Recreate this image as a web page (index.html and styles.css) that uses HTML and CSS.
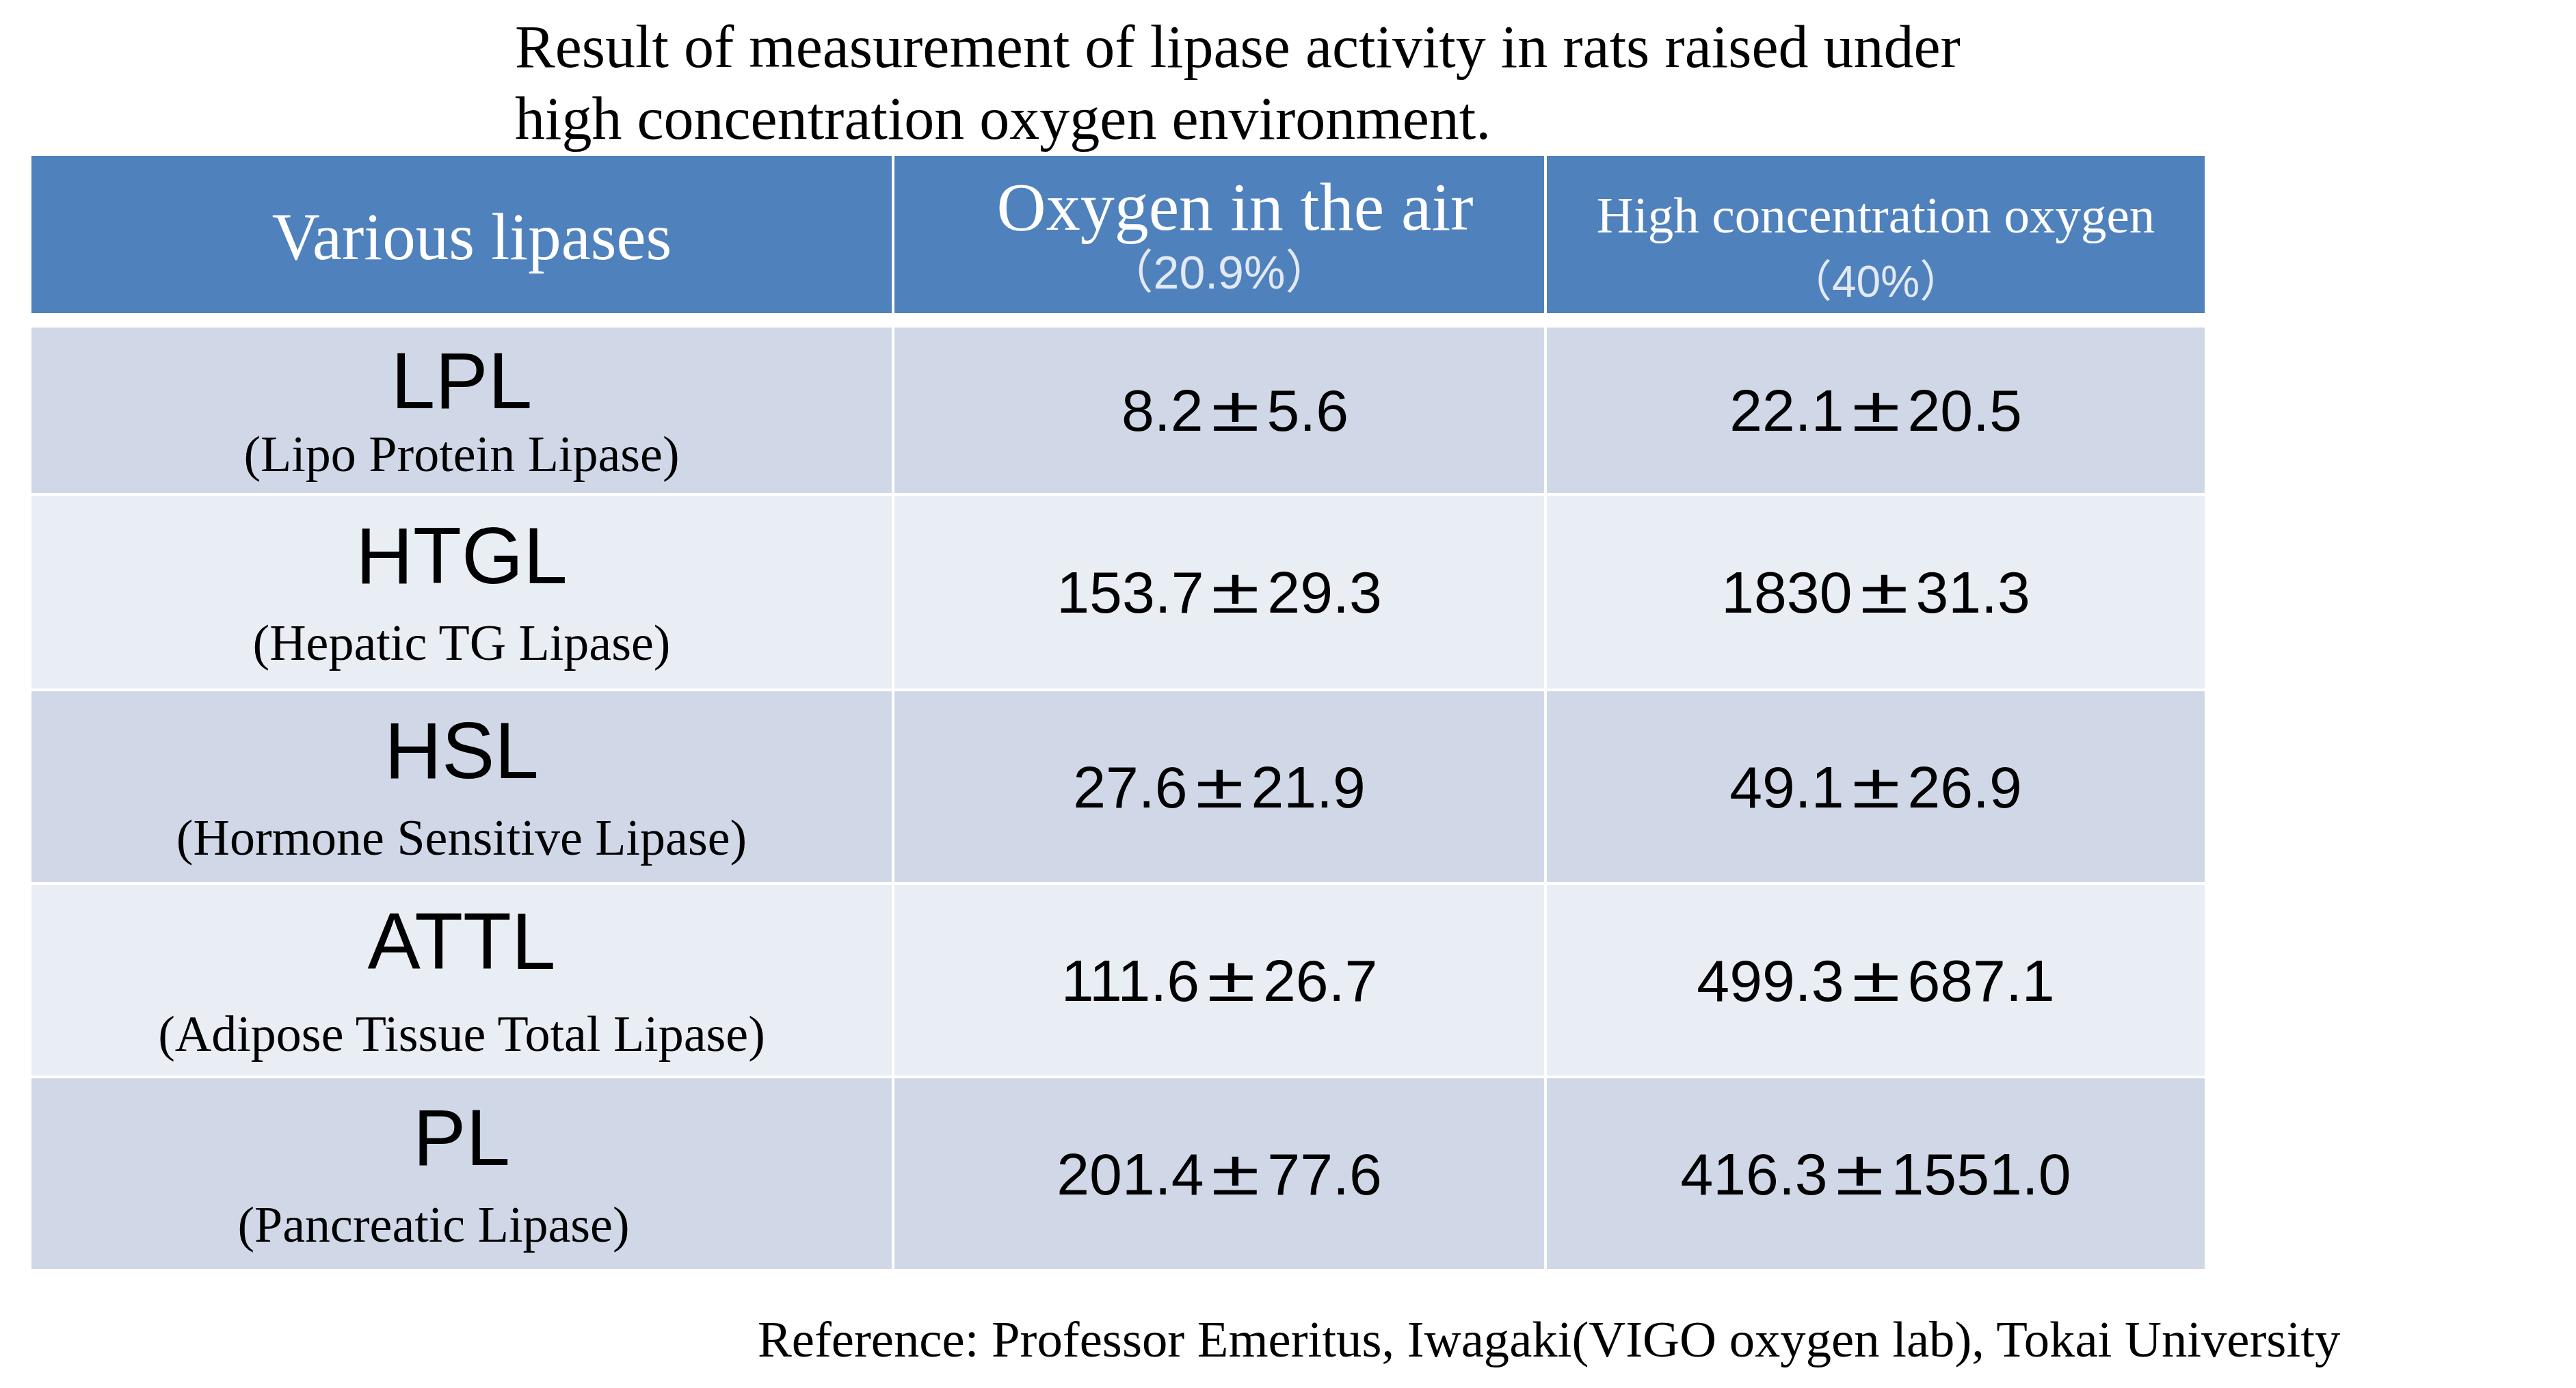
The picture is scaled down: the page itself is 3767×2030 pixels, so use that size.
FILE: index.html
```html
<!DOCTYPE html>
<html lang="en">
<head>
<meta charset="utf-8">
<title>Lipase activity</title>
<link rel="stylesheet" href="styles.css">
</head>
<body>
<div class="page">
  <h1 class="title">Result of measurement of lipase activity in rats raised under<br>high concentration oxygen environment.</h1>
  <div class="table">
    <div class="row head">
      <div class="cell c1"><span class="h-main various">Various lipases</span></div>
      <div class="cell c2"><span class="h-main shift">Oxygen in the air</span><span class="h-sub">（20.9%）</span></div>
      <div class="cell c3"><span class="h-main small">High concentration oxygen</span><span class="h-sub sub3">（40%）</span></div>
    </div>
    <div class="body">
      <div class="row odd r1 tight">
        <div class="cell name"><span class="abbr">LPL</span><span class="full">(Lipo Protein Lipase)</span></div>
        <div class="cell shift"><span class="num">8.2<span class="pm">±</span>5.6</span></div>
        <div class="cell"><span class="num">22.1<span class="pm">±</span>20.5</span></div>
      </div>
      <div class="row even r2">
        <div class="cell name"><span class="abbr">HTGL</span><span class="full">(Hepatic TG Lipase)</span></div>
        <div class="cell"><span class="num">153.7<span class="pm">±</span>29.3</span></div>
        <div class="cell"><span class="num">1830<span class="pm">±</span>31.3</span></div>
      </div>
      <div class="row odd r3">
        <div class="cell name"><span class="abbr">HSL</span><span class="full">(Hormone Sensitive Lipase)</span></div>
        <div class="cell"><span class="num">27.6<span class="pm">±</span>21.9</span></div>
        <div class="cell"><span class="num">49.1<span class="pm">±</span>26.9</span></div>
      </div>
      <div class="row even r4">
        <div class="cell name"><span class="abbr">ATTL</span><span class="full wide">(Adipose Tissue Total Lipase)</span></div>
        <div class="cell"><span class="num">111.6<span class="pm">±</span>26.7</span></div>
        <div class="cell"><span class="num">499.3<span class="pm">±</span>687.1</span></div>
      </div>
      <div class="row odd r5">
        <div class="cell name"><span class="abbr">PL</span><span class="full offset">(Pancreatic Lipase)</span></div>
        <div class="cell"><span class="num">201.4<span class="pm">±</span>77.6</span></div>
        <div class="cell"><span class="num">416.3<span class="pm">±</span>1551.0</span></div>
      </div>
    </div>
  </div>
  <p class="ref">Reference: Professor Emeritus, Iwagaki(VIGO oxygen lab), Tokai University</p>
</div>
</body>
</html>
```

FILE: styles.css
```css
html, body {
  margin: 0;
  padding: 0;
  background: #ffffff;
}

.page {
  font-family: "Liberation Serif", "Times New Roman", serif;
  color: #000000;
}

.title {
  margin: 0;
  padding: 16px 0 0 753px;
  font-weight: normal;
  font-size: 88px;
  line-height: 105px;
  white-space: nowrap;
}

.table {
  margin: 2px 0 0 46px;
  width: 3178px;
}

.row {
  display: grid;
  grid-template-columns: 1258px 950px 962px;
  column-gap: 4px;
}

.cell {
  display: flex;
  flex-direction: column;
  align-items: center;
  justify-content: center;
}

.head {
  height: 230px;
  margin-bottom: 21px;
}

.head .cell {
  background: #4f81bd;
  color: #ffffff;
}

.h-main {
  font-size: 100px;
  line-height: 100px;
  white-space: nowrap;
}

.h-main.various {
  font-size: 97px;
  padding-left: 30px;
  padding-top: 8px;
}

.h-main.small {
  font-size: 75px;
  line-height: 80px;
}

.h-sub {
  font-family: "Liberation Sans", "Noto Sans CJK JP", sans-serif;
  font-size: 68px;
  line-height: 70px;
  margin-top: 10px;
  color: #e2e9f3;
  white-space: nowrap;
}

.h-sub.sub3 {
  font-size: 64px;
  margin-top: 22px;
}

.head .c3 {
  padding-top: 36px;
}

.shift {
  padding-left: 46px;
}

.body {
  display: flex;
  flex-direction: column;
  gap: 4px;
}

.r1 { height: 242px; }
.r2 { height: 282px; }
.r3 { height: 279px; }
.r4 { height: 279px; }
.r5 { height: 279px; }

.odd .cell { background: #d0d8e8; }
.even .cell { background: #e9edf4; }

.name {
  padding-top: 8px;
}

.tight .name {
  padding-top: 7px;
}

.abbr {
  font-family: "Liberation Sans", Arial, sans-serif;
  font-size: 116px;
  line-height: 116px;
}

.full {
  font-size: 74px;
  line-height: 90px;
  margin-top: 24px;
  white-space: nowrap;
}

.full.wide {
  margin-top: 32px;
}

.full.offset {
  padding-right: 82px;
}

.tight .full {
  margin-top: 4px;
}

.num {
  font-family: "Liberation Sans", Arial, sans-serif;
  font-size: 86px;
  line-height: 100px;
  white-space: nowrap;
}

.pm {
  display: inline-block;
  width: 1.08em;
  text-align: center;
  transform: scale(1.5, 1.08);
  transform-origin: 50% 85%;
}

.ref {
  margin: 58px 0 0 0;
  padding-left: 1108px;
  font-size: 74.7px;
  line-height: 90px;
  white-space: nowrap;
}
```
